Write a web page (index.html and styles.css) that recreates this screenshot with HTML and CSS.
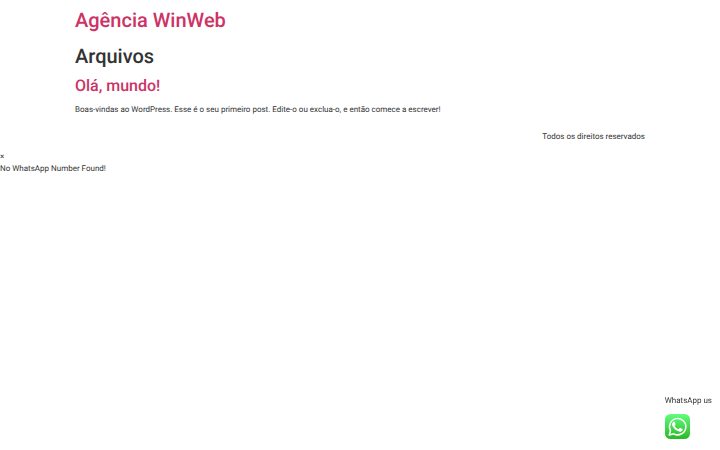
FILE: index.html
```html
<!DOCTYPE html>
<html lang="pt-BR">
<head>
    <meta charset="UTF-8">
    <meta name="viewport" content="width=device-width, initial-scale=1.0">
    <title>Arquivos - Agência WinWeb</title>
    <link rel="stylesheet" href="styles.css">
</head>
<body>
    <header class="site-header">
        <h1 class="site-title"><a href="#">Agência WinWeb</a></h1>
    </header>

    <main class="site-main">
        <h1 class="entry-title">Arquivos</h1>
        <article class="post">
            <h2 class="post-title"><a href="#">Olá, mundo!</a></h2>
            <p>Boas-vindas ao WordPress. Esse é o seu primeiro post. Edite-o ou exclua-o, e então comece a escrever!</p>
        </article>
    </main>

    <footer class="site-footer">
        <p>Todos os direitos reservados</p>
    </footer>

    <div class="notice">
        <div>×</div>
        <div>No WhatsApp Number Found!</div>
    </div>

    <div class="whatsapp">
        <span>WhatsApp us</span>
        <a href="#" class="whatsapp-link" aria-label="WhatsApp">
            <svg class="whatsapp-icon" viewBox="0 0 50 50">
                <defs>
                    <linearGradient id="green" x1="0" y1="0" x2="0" y2="1">
                        <stop offset="0" stop-color="#61fd7d"/>
                        <stop offset="1" stop-color="#2bb826"/>
                    </linearGradient>
                </defs>
                <rect width="50" height="50" rx="11" fill="url(#green)"/>
                <path fill="none" stroke="#fff" stroke-width="3" stroke-linejoin="round" d="M8.500 42L11 33A16.300 16.300 0 1 1 17.500 39.600Z"/>
                <path fill="#fff" transform="translate(2.500 2.500) scale(.9)" d="M19.200 15.600c-.5-.9-1-.9-1.700-.9-.8 0-1.700.2-2.400 1.100-.8.9-2.100 2.200-2.100 4.800 0 2.700 2 5.300 2.300 5.700.3.400 4 6.400 9.900 8.700 4.900 1.900 5.900 1.500 7 1.400 1.100-.1 3.400-1.400 3.900-2.800.5-1.400.5-2.600.3-2.800-.2-.3-.6-.4-1.200-.7l-3.900-1.900c-.6-.2-1-.3-1.500.3l-1.800 2.200c-.3.400-.7.400-1.300.1-.6-.3-2.500-.9-4.700-2.900-1.700-1.500-2.900-3.500-3.300-4.100-.3-.6 0-.9.300-1.200l1.400-1.700c.3-.5.400-.8.100-1.400z"/>
            </svg>
        </a>
    </div>
</body>
</html>
```
FILE: styles.css
```css
* {
    box-sizing: border-box;
}

body {
    margin: 0;
    background-color: #fff;
    color: #333;
    font-family: Roboto, "Noto Sans", sans-serif;
    font-size: 8px;
    line-height: 12px;
    text-rendering: geometricPrecision;
}

h1, h2 {
    margin: 0 0 8px;
    font-weight: 500;
}

h1 {
    font-size: 20px;
    line-height: 24px;
}

h2 {
    font-size: 16px;
    line-height: 20px;
}

p {
    margin: 0;
}

a {
    color: #c36;
    text-decoration: none;
}

.site-header,
.site-main,
.site-footer {
    width: 100%;
    max-width: 570px;
    margin: 0 auto;
}

.site-header {
    padding: 8px 0 4px;
}

.site-footer {
    padding: 15px 0 8px;
    text-align: right;
}

.whatsapp {
    position: fixed;
    right: 8px;
    bottom: 11px;
    display: flex;
    flex-direction: column;
    gap: 7px;
}

.whatsapp-link {
    display: block;
    width: 25px;
    height: 25px;
}

.whatsapp-icon {
    display: block;
    width: 100%;
    height: 100%;
}
```
